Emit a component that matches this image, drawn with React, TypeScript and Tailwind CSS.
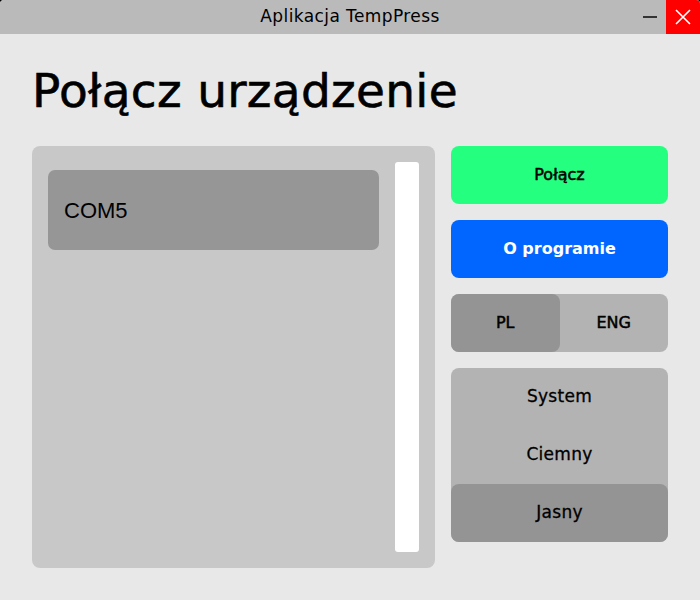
import { useState } from "react";

const font = { fontFamily: '"DejaVu Sans", "Open Sans", sans-serif' };

export default function App() {
  const [lang, setLang] = useState("PL");
  const [theme, setTheme] = useState("Jasny");

  return (
    <div className="w-[700px] h-[600px] bg-black" style={font}>
      <div className="w-full h-full bg-[#e8e8e8] rounded-t-[4px] overflow-hidden flex flex-col">
        {/* title bar */}
        <div className="h-[34px] bg-[#bababa] flex items-center relative">
          <div className="flex-1 text-center text-[17px] tracking-[0.4px] text-black">Aplikacja TempPress</div>
          <div className="absolute right-[34px] top-0 h-[34px] w-[32px] flex items-center justify-center">
            <div className="w-[14px] h-[1.5px] bg-[#333]" />
          </div>
          <div className="absolute right-0 top-0 h-[34px] w-[34px] bg-[#ff0000] flex items-center justify-center">
            <svg width="16" height="16" viewBox="0 0 16 16">
              <path d="M1 1 L15 15 M15 1 L1 15" stroke="white" strokeWidth="1.6" />
            </svg>
          </div>
        </div>

        <div className="px-8">
          <h1 className="h-[112px] flex items-center text-[47px] tracking-[0.3px] text-black [-webkit-text-stroke:0.6px_black] pt-[2px]">
            Połącz urządzenie
          </h1>

          <div className="flex gap-4">
            {/* device list */}
            <div className="w-[403px] h-[422px] bg-[#c8c8c8] rounded-[8px] flex gap-4 p-4">
              <div className="flex-1 pt-2">
                <div className="h-[80px] bg-[#969696] rounded-[7px] flex items-center px-4">
                  <span className="text-[22px] text-black" style={{ fontFamily: '"Liberation Sans", Arial, sans-serif' }}>
                    COM5
                  </span>
                </div>
              </div>
              <div className="w-6 bg-white rounded-[3px]" />
            </div>

            {/* right column */}
            <div className="w-[217px] flex flex-col gap-4">
              <button className="h-[58px] rounded-[8px] bg-[#25ff7f] text-black text-[16px] [-webkit-text-stroke:0.5px_black]">
                Połącz
              </button>
              <button className="h-[58px] rounded-[8px] bg-[#0066ff] text-white text-[16px] font-bold">
                O programie
              </button>
              <div className="h-[58px] rounded-[8px] bg-[#b3b3b3] flex">
                {["PL", "ENG"].map((l) => (
                  <button
                    key={l}
                    onClick={() => setLang(l)}
                    className={
                      "flex-1 rounded-[8px] text-[16px] text-black [-webkit-text-stroke:0.5px_black] " +
                      (lang === l ? "bg-[#949494]" : "")
                    }
                  >
                    {l}
                  </button>
                ))}
              </div>
              <div className="h-[174px] rounded-[8px] bg-[#b3b3b3] flex flex-col">
                {["System", "Ciemny", "Jasny"].map((t) => (
                  <button
                    key={t}
                    onClick={() => setTheme(t)}
                    className={
                      "h-[58px] rounded-[8px] text-[17px] tracking-[0.3px] text-black [-webkit-text-stroke:0.3px_black] " +
                      (theme === t ? "bg-[#949494]" : "")
                    }
                  >
                    {t}
                  </button>
                ))}
              </div>
            </div>
          </div>
        </div>
      </div>
    </div>
  );
}
